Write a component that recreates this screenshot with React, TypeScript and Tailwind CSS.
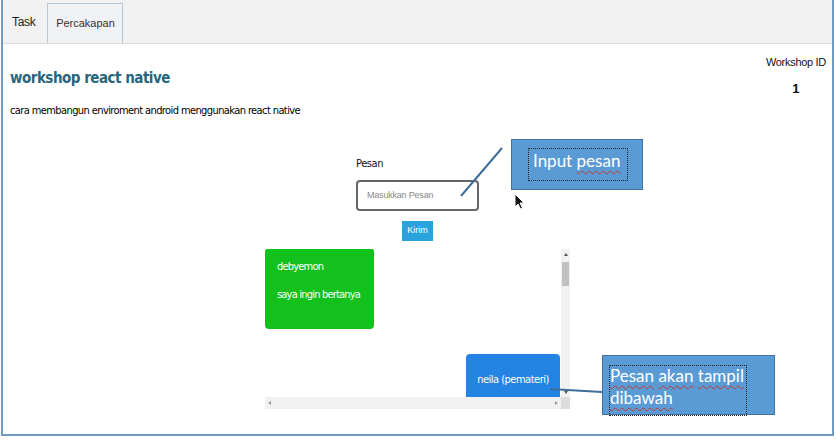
import React from "react";

const ubuntu = { fontFamily: '"DejaVu Sans Condensed", "Liberation Sans", sans-serif' };
const arial = { fontFamily: '"Liberation Sans", Arial, sans-serif' };
const calibri = { fontFamily: 'Lato, "Open Sans", sans-serif' };

const squiggle = "underline decoration-wavy decoration-[#c0392b] decoration-1 underline-offset-[3px]";

function Callout({ className, children, boxClass }: { className: string; children: React.ReactNode; boxClass: string }) {
  return (
    <div className={`absolute bg-[#5b9bd5] border border-[#41719c] ${className}`}>
      <div className={`absolute border border-dotted border-[#222] ${boxClass}`} />
      {children}
    </div>
  );
}

export default function App() {
  return (
    <div className="w-[837px] h-[440px] bg-white relative overflow-hidden">
      <div className="ml-px w-[833px] h-[436px] border-x-2 border-b-2 border-[#6f9cc4] flex flex-col">
        {/* tabs */}
        <div className="h-[44px] bg-[#f2f2f2] border-b border-[#dcdcdc] flex items-end pl-[9px] shrink-0">
          <div className="h-full flex items-center text-[12px] tracking-[-0.3px] text-[#222]" style={arial}>
            Task
          </div>
          <div
            className="ml-[12px] w-[76px] h-[40px] border border-b-0 border-[#b9c6d8] bg-[#f0f2f6] flex items-center justify-center text-[11px] text-[#333]"
            style={arial}
          >
            Percakapan
          </div>
        </div>

        {/* header */}
        <div className="h-[110px] flex justify-between shrink-0">
          <div className="pl-[7px] pt-[24px]">
            <h1 className="text-[15px] font-bold tracking-[-0.5px] text-[#27667c] leading-[20px]" style={ubuntu}>
              workshop react native
            </h1>
            <p className="mt-[16px] text-[11px] tracking-[-0.6px] text-black leading-[14px]" style={ubuntu}>
              cara membangun enviroment android menggunakan react native
            </p>
          </div>
          <div className="pr-[6px] pt-[11px] flex flex-col items-center" style={arial}>
            <div className="text-[11px] tracking-[-0.3px] text-[#111] leading-[14px]">Workshop ID</div>
            <div className="mt-[13px] text-[13px] font-bold text-[#111] leading-[14px]">1</div>
          </div>
        </div>

        {/* form */}
        <div className="flex flex-col items-center">
          <div className="w-[123px] flex flex-col items-center">
            <div className="self-start mt-[3px] text-[11px] tracking-[-0.4px] text-[#111] leading-[14px]" style={ubuntu}>
              Pesan
            </div>
            <div
              className="mt-[9px] w-[123px] h-[31px] rounded-[4px] border-2 border-[#666] flex items-center pl-[9px] text-[9px] tracking-[-0.2px] text-[#888]"
              style={arial}
            >
              Masukkan Pesan
            </div>
            <div
              className="mt-[10px] w-[31px] h-[20px] bg-[#29a3dc] flex items-center justify-center text-[9px] text-white"
              style={arial}
            >
              Kirim
            </div>
          </div>

          {/* chat */}
          <div className="mt-[8px] w-[305px] h-[160px] flex flex-col">
            <div className="flex h-[148px]">
              <div className="flex-1 flex flex-col overflow-hidden" style={ubuntu}>
                <div className="w-[109px] h-[80px] shrink-0 bg-[#12c11c] rounded-b-[4px] rounded-t-[2px] pl-[12px] pt-[11px] text-[11px] tracking-[-0.8px] whitespace-nowrap text-white leading-[14px]">
                  <div>debyemon</div>
                  <div className="mt-[14px]">saya ingin bertanya</div>
                </div>
                <div className="self-end mr-px mt-[25px] w-[94px] h-[50px] shrink-0 bg-[#2484e4] rounded-t-[4px] pt-[19px] text-center text-[11px] tracking-[-0.5px] whitespace-nowrap text-white leading-[14px]">
                  neila (pemateri)
                </div>
              </div>
              <div className="w-[9px] bg-[#f1f1f1] flex flex-col items-center">
                <div className="mt-[4px] w-0 h-0 border-x-[2px] border-x-transparent border-b-[3px] border-b-[#555]" />
                <div className="mt-[6px] w-[7px] h-[24px] bg-[#c1c1c1]" />
                <div className="mt-auto mb-[3px] w-0 h-0 border-x-[2px] border-x-transparent border-t-[3px] border-t-[#555]" />
              </div>
            </div>
            <div className="flex h-[12px]">
              <div className="flex-1 bg-[#f1f1f1] flex items-center justify-between px-[3px]">
                <div className="w-0 h-0 border-y-[2px] border-y-transparent border-r-[3px] border-r-[#999]" />
                <div className="w-0 h-0 border-y-[2px] border-y-transparent border-l-[3px] border-l-[#999]" />
              </div>
              <div className="w-[9px] bg-[#dcdcdc]" />
            </div>
          </div>
        </div>
      </div>

      {/* annotation lines */}
      <svg className="absolute left-0 top-0 pointer-events-none" width="837" height="440">
        <line x1="502" y1="148" x2="461" y2="196" stroke="#3f6d99" strokeWidth="2" />
        <line x1="550" y1="389" x2="602" y2="392" stroke="#3f6d99" strokeWidth="2" />
      </svg>

      <Callout className="left-[511px] top-[139px] w-[132px] h-[51px]" boxClass="left-[16px] top-[8px] w-[100px] h-[33px]">
        <div className="absolute left-[21px] top-[10px] text-[17px] leading-[22px] text-white whitespace-nowrap" style={calibri}>
          Input <span className={squiggle}>pesan</span>
        </div>
      </Callout>

      <Callout className="left-[602px] top-[355px] w-[173px] h-[60px]" boxClass="left-[6px] top-[9px] w-[138px] h-[51px]">
        <div className="absolute left-[7px] top-[9px] text-[17px] leading-[22px] text-white whitespace-nowrap" style={calibri}>
          <div>
            <span className={squiggle}>Pesan</span> <span className={squiggle}>akan</span>{" "}
            <span className={squiggle}>tampil</span>
          </div>
          <div>
            <span className={squiggle}>dibawah</span>
          </div>
        </div>
      </Callout>

      {/* mouse cursor */}
      <svg className="absolute left-[514px] top-[193px]" width="11" height="17" viewBox="0 0 11 17">
        <path d="M1 1 L1 14 L4 11 L6.5 16 L8.5 15 L6 10 L10 10 Z" fill="#111" stroke="#fff" strokeWidth="1" />
      </svg>
    </div>
  );
}
